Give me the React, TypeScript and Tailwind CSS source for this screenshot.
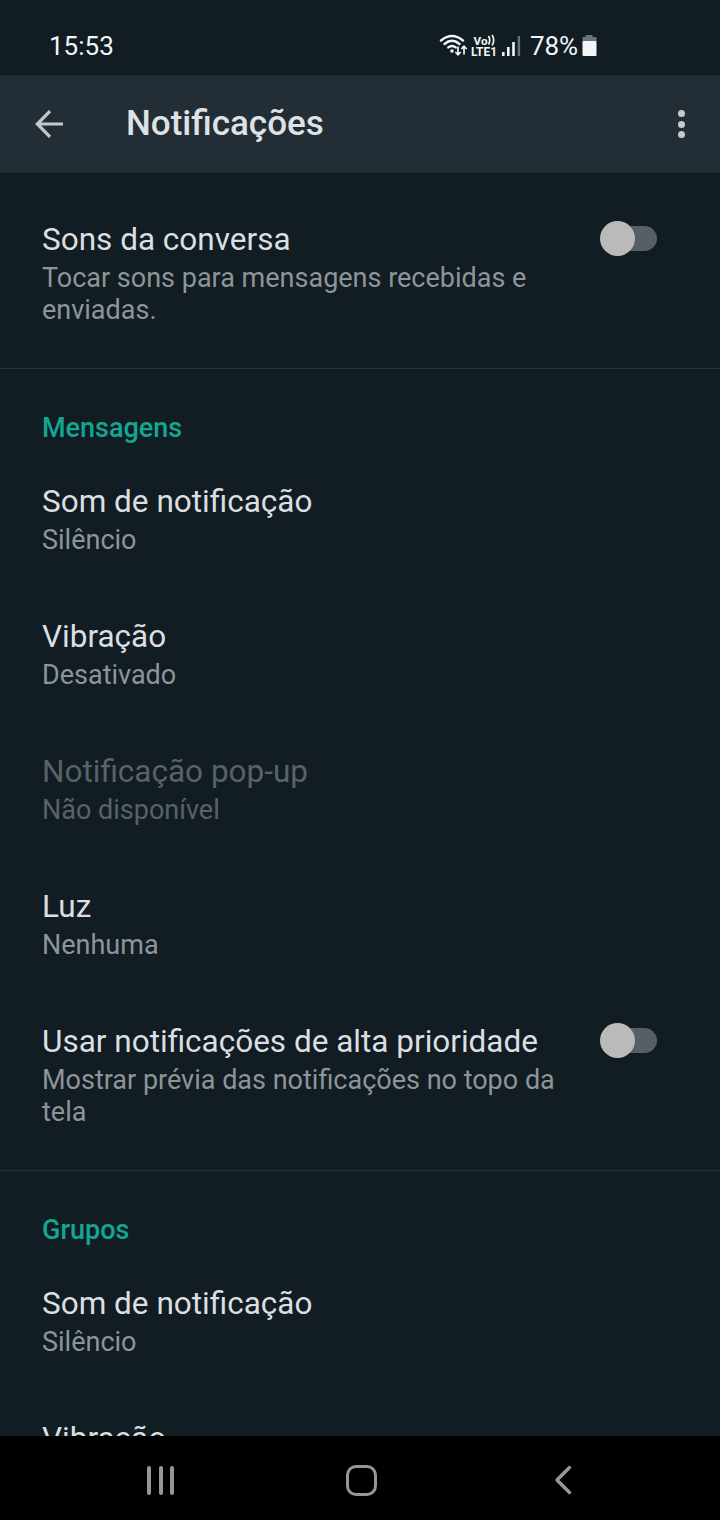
import { useState } from "react";

type Item = {
  title: string;
  detail: string;
  disabled?: boolean;
  toggle?: boolean;
};

const soundItems: Item[] = [
  { title: "Sons da conversa", detail: "Tocar sons para mensagens recebidas e enviadas.", toggle: true },
];

const messageItems: Item[] = [
  { title: "Som de notificação", detail: "Silêncio" },
  { title: "Vibração", detail: "Desativado" },
  { title: "Notificação pop-up", detail: "Não disponível", disabled: true },
  { title: "Luz", detail: "Nenhuma" },
  { title: "Usar notificações de alta prioridade", detail: "Mostrar prévia das notificações no topo da tela", toggle: true },
];

const groupItems: Item[] = [
  { title: "Som de notificação", detail: "Silêncio" },
  { title: "Vibração", detail: "Desativado" },
];

const Switch = ({ label }: { label: string }) => {
  const [on, setOn] = useState(false);

  return (
    <button
      role="switch"
      aria-checked={on}
      aria-label={label}
      onClick={() => setOn(!on)}
      className={`mr-[63px] flex h-[35px] w-[57px] shrink-0 items-center ${on ? "-scale-x-100" : ""}`}
    >
      <span className="z-10 size-[35px] shrink-0 rounded-full bg-[#bababa]" />
      <span className="-ml-[29px] h-[25px] w-[51px] shrink-0 rounded-full bg-[#566064]" />
    </button>
  );
};

const Row = ({ title, detail, disabled, toggle }: Item) => (
  <div className="flex items-start py-[31px] pl-[42px]">
    <div className={toggle ? "w-[558px] shrink-0 pr-8" : "flex-1"}>
      <p className={`whitespace-nowrap text-[31.5px] leading-[37px] ${disabled ? "text-[#596267]" : "text-[#dbdfe1]"}`}>{title}</p>
      <p className={`mt-1 text-[27px] leading-8 ${disabled ? "text-[#596267]" : "text-[#8d9598]"}`}>{detail}</p>
    </div>
    {toggle && <Switch label={title} />}
  </div>
);

const Section = ({ heading, items }: { heading?: string; items: Item[] }) => (
  <section className="border-b border-[#263238] pb-[11px]">
    {heading && <h2 className="pt-[43px] pb-2 pl-[42px] text-[27px] leading-8 font-medium text-[#13a693]">{heading}</h2>}
    {items.map((item) => (
      <Row key={item.title} {...item} />
    ))}
  </section>
);

const StatusBar = () => (
  <div className="flex h-[75px] shrink-0 items-center justify-between pt-[17px] pr-[123px] pl-[49px] text-[26px] text-[#f1f5f7]">
    <span>15:53</span>
    <svg width="158" height="30" viewBox="0 0 158 30" fill="none" stroke="currentColor">
      {/* Wi-Fi */}
      <g strokeWidth="2.4" strokeLinecap="round">
        <path d="M2 9.5Q13 .5 24 9.5" />
        <path d="M5.5 13Q13 6.7 20.5 13" />
        <path d="M9.3 16.4Q13 13.5 16.7 16.4" />
      </g>
      <circle cx="13" cy="20" r="1.8" fill="currentColor" stroke="none" />
      <path d="M19 15.5v8M16.3 21l2.7 2.8 2.7-2.8M25 23.5v-8M22.3 18l2.7-2.8 2.7 2.8" strokeWidth="1.7" />
      {/* VoLTE */}
      <g fill="currentColor" stroke="none" fontFamily="Roboto, sans-serif" fontWeight="700">
        <text x="34.5" y="13.5" fontSize="11.5" textLength="14" lengthAdjust="spacingAndGlyphs">Vo</text>
        <text x="32" y="25" fontSize="12.5" textLength="26" lengthAdjust="spacingAndGlyphs">LTE1</text>
      </g>
      <path d="M49.5 5q2.5 4.3 0 8.5M53 4q3.5 5.3 0 10.5" strokeWidth="1.7" />
      {/* Sinal */}
      <g stroke="none" fill="currentColor">
        <rect x="63" y="21" width="2.6" height="4" />
        <rect x="68" y="16" width="2.6" height="9" />
        <rect x="73.2" y="11" width="2.6" height="14" />
        <rect x="78.7" y="5" width="2.4" height="20" fill="#66747a" />
      </g>
      <text x="91" y="24" fontSize="26" fill="currentColor" stroke="none" textLength="48">78%</text>
      {/* Bateria */}
      <path d="M147 4h7v2h4v4h-14V6h3z" transform="translate(-.5 0)" fill="#66747a" stroke="none" />
      <rect x="143.5" y="10" width="14" height="15" rx=".8" fill="currentColor" stroke="none" />
    </svg>
  </div>
);

const AppBar = () => (
  <header className="flex h-[98px] shrink-0 items-center bg-[#232d35] text-[#dfe2e4]">
    <button aria-label="Voltar" className="ml-[35px] text-[#c3c7c9]">
      <svg width="28" height="28" viewBox="0 0 28 28" fill="none" stroke="currentColor" strokeWidth="3.2">
        <path d="M28 14H3M15 1.2 2.3 14 15 26.8" />
      </svg>
    </button>
    <h1 className="ml-[63px] flex-1 text-[35px] leading-[42px] font-medium">Notificações</h1>
    <button aria-label="Mais opções" className="mr-[35px] flex flex-col gap-[3.5px]">
      <span className="size-[7px] rounded-full bg-[#c3cbd0]" />
      <span className="size-[7px] rounded-full bg-[#c3cbd0]" />
      <span className="size-[7px] rounded-full bg-[#c3cbd0]" />
    </button>
  </header>
);

const NavBar = () => (
  <nav className="flex h-[84px] shrink-0 items-center bg-black pt-1 pl-[147px] text-[#969696]">
    <button aria-label="Recentes" className="flex gap-[7.5px]">
      <span className="h-[29px] w-1 rounded-full bg-[#969696]" />
      <span className="h-[29px] w-1 rounded-full bg-[#969696]" />
      <span className="h-[29px] w-1 rounded-full bg-[#969696]" />
    </button>
    <button aria-label="Início" className="ml-[172px] size-[31px] rounded-[10px] border-[3.5px] border-[#969696]" />
    <button aria-label="Voltar" className="ml-[177px]">
      <svg width="20" height="30" viewBox="0 0 20 30" fill="none" stroke="currentColor" strokeWidth="3.4" strokeLinecap="round" strokeLinejoin="round">
        <path d="M15.5 2.5 3 15l12.5 12.5" />
      </svg>
    </button>
  </nav>
);

export default function App() {
  return (
    <div className="flex h-[1520px] w-[720px] flex-col overflow-hidden bg-[#111c23] font-['Roboto',sans-serif]">
      <StatusBar />
      <AppBar />
      <main className="min-h-0 flex-1 overflow-hidden pt-[17px]">
        <Section items={soundItems} />
        <Section heading="Mensagens" items={messageItems} />
        <Section heading="Grupos" items={groupItems} />
      </main>
      <NavBar />
    </div>
  );
}
